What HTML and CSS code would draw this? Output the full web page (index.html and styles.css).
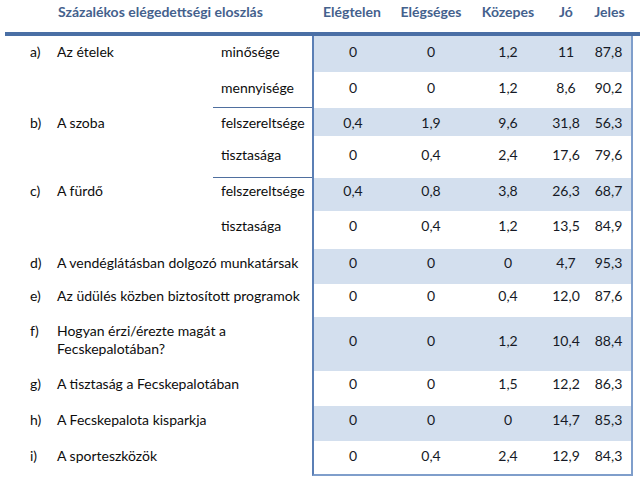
FILE: index.html
```html
<!DOCTYPE html>
<html lang="hu">
<head>
<meta charset="utf-8">
<title>Százalékos elégedettségi eloszlás</title>
<link rel="stylesheet" href="styles.css">
</head>
<body>
<table class="survey">
  <colgroup>
    <col class="c-letter"><col class="c-label"><col class="c-sub">
    <col class="c-n1"><col class="c-n2"><col class="c-n3"><col class="c-n4"><col class="c-n5">
    <col class="c-pad">
  </colgroup>
  <thead>
    <tr>
      <th></th>
      <th colspan="2" class="title">Százalékos elégedettségi eloszlás</th>
      <th>Elégtelen</th><th>Elégséges</th><th>Közepes</th><th>Jó</th><th>Jeles</th>
      <th></th>
    </tr>
  </thead>
  <tbody>
    <tr class="shade">
      <td class="letter">a)</td><td class="label">Az ételek</td><td class="sub">minősége</td>
      <td class="num first">0</td><td class="num">0</td><td class="num">1,2</td><td class="num">11</td><td class="num last">87,8</td><td class="pad"></td>
    </tr>
    <tr>
      <td class="letter"></td><td class="label"></td><td class="sub sep">mennyisége</td>
      <td class="num first">0</td><td class="num">0</td><td class="num">1,2</td><td class="num">8,6</td><td class="num last">90,2</td><td class="pad"></td>
    </tr>
    <tr class="shade">
      <td class="letter">b)</td><td class="label">A szoba</td><td class="sub">felszereltsége</td>
      <td class="num first">0,4</td><td class="num">1,9</td><td class="num">9,6</td><td class="num">31,8</td><td class="num last">56,3</td><td class="pad"></td>
    </tr>
    <tr>
      <td class="letter"></td><td class="label"></td><td class="sub sep">tisztasága</td>
      <td class="num first">0</td><td class="num">0,4</td><td class="num">2,4</td><td class="num">17,6</td><td class="num last">79,6</td><td class="pad"></td>
    </tr>
    <tr class="shade">
      <td class="letter">c)</td><td class="label">A fürdő</td><td class="sub">felszereltsége</td>
      <td class="num first">0,4</td><td class="num">0,8</td><td class="num">3,8</td><td class="num">26,3</td><td class="num last">68,7</td><td class="pad"></td>
    </tr>
    <tr>
      <td class="letter"></td><td class="label"></td><td class="sub">tisztasága</td>
      <td class="num first">0</td><td class="num">0,4</td><td class="num">1,2</td><td class="num">13,5</td><td class="num last">84,9</td><td class="pad"></td>
    </tr>
    <tr class="shade">
      <td class="letter">d)</td><td class="label" colspan="2">A vendéglátásban dolgozó munkatársak</td>
      <td class="num first">0</td><td class="num">0</td><td class="num">0</td><td class="num">4,7</td><td class="num last">95,3</td><td class="pad"></td>
    </tr>
    <tr>
      <td class="letter">e)</td><td class="label" colspan="2">Az üdülés közben biztosított programok</td>
      <td class="num first">0</td><td class="num">0</td><td class="num">0,4</td><td class="num">12,0</td><td class="num last">87,6</td><td class="pad"></td>
    </tr>
    <tr class="shade tall">
      <td class="letter">f)</td><td class="label" colspan="2">Hogyan érzi/érezte magát a<br>Fecskepalotában?</td>
      <td class="num first">0</td><td class="num">0</td><td class="num">1,2</td><td class="num">10,4</td><td class="num last">88,4</td><td class="pad"></td>
    </tr>
    <tr>
      <td class="letter">g)</td><td class="label" colspan="2">A tisztaság a Fecskepalotában</td>
      <td class="num first">0</td><td class="num">0</td><td class="num">1,5</td><td class="num">12,2</td><td class="num last">86,3</td><td class="pad"></td>
    </tr>
    <tr class="shade">
      <td class="letter">h)</td><td class="label" colspan="2">A Fecskepalota kisparkja</td>
      <td class="num first">0</td><td class="num">0</td><td class="num">0</td><td class="num">14,7</td><td class="num last">85,3</td><td class="pad"></td>
    </tr>
    <tr class="final">
      <td class="letter">i)</td><td class="label" colspan="2">A sporteszközök</td>
      <td class="num first">0</td><td class="num">0,4</td><td class="num">2,4</td><td class="num">12,9</td><td class="num last">84,3</td><td class="pad"></td>
    </tr>
  </tbody>
</table>
</body>
</html>
```

FILE: styles.css
```css
html, body {
  margin: 0;
  padding: 0;
  background: #ffffff;
}

body {
  font-family: Lato, "Open Sans", sans-serif;
  font-size: 14px;
  color: #0d0d0d;
}

.survey {
  margin-left: 5px;
  width: 635px;
  table-layout: fixed;
  border-collapse: separate;
  border-spacing: 0;
}

.c-letter { width: 52px; }
.c-label { width: 156px; }
.c-sub { width: 99px; }
.c-n1 { width: 80px; }
.c-n2 { width: 78px; }
.c-n3 { width: 76px; }
.c-n4 { width: 40px; }
.c-n5 { width: 47px; }
.c-pad { width: 7px; }

.survey th {
  height: 29px;
  padding: 3px 0 0 0;
  vertical-align: top;
  font-weight: 700;
  color: #44618d;
  text-align: center;
  line-height: 18px;
  border-bottom: 4px solid #4a6fa5;
  white-space: nowrap;
}

.survey th.title {
  text-align: left;
  padding-left: 1px;
}

.survey td {
  padding: var(--pt) 0 0 0;
  vertical-align: top;
  line-height: 18px;
  white-space: nowrap;
}

.survey tbody tr:nth-child(1)  { height: 36px; --pt: 7px; }
.survey tbody tr:nth-child(2)  { height: 36px; --pt: 7px; }
.survey tbody tr:nth-child(3)  { height: 28px; --pt: 6px; }
.survey tbody tr:nth-child(4)  { height: 42px; --pt: 10px; }
.survey tbody tr:nth-child(5)  { height: 33px; --pt: 4px; }
.survey tbody tr:nth-child(6)  { height: 38px; --pt: 6px; }
.survey tbody tr:nth-child(7)  { height: 35px; --pt: 5px; }
.survey tbody tr:nth-child(8)  { height: 33px; --pt: 3px; }
.survey tbody tr:nth-child(9)  { height: 54px; --pt: 5px; }
.survey tbody tr:nth-child(10) { height: 35px; --pt: 4px; }
.survey tbody tr:nth-child(11) { height: 35px; --pt: 5px; }
.survey tbody tr:nth-child(12) { height: 35px; --pt: 6px; }

.survey td.letter {
  padding-left: 25px;
}

.survey td.label {
  padding-left: 0;
}

.survey td.sub {
  padding-left: 8px;
}

.survey td.sep {
  border-bottom: 1px solid #4f6f9f;
}

.survey td.num {
  text-align: center;
  color: #161a26;
}

.survey tr.tall td.num {
  padding-top: 15px;
}

.survey tr.shade td.num {
  background: #d3dfee;
}

.survey td.num.first {
  border-left: 2px solid #5b7fb5;
}

.survey td.num.last {
  border-right: 2px solid #7f9ecb;
}

.survey tr.final td.num {
  border-bottom: 2px solid #7f9ecb;
}
```
